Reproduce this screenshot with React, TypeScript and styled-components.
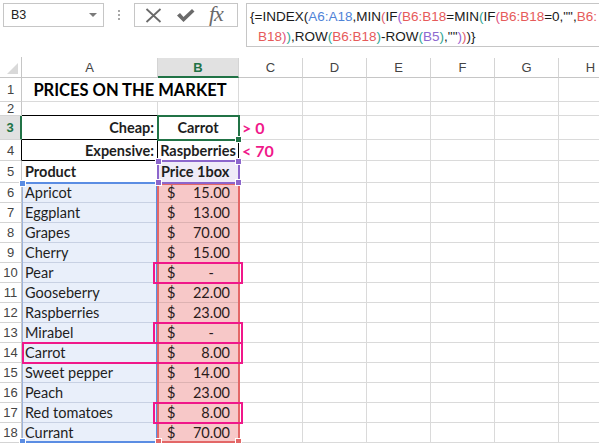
import styled, { createGlobalStyle } from 'styled-components'

const GlobalStyle = createGlobalStyle`
  html, body {
    margin: 0;
    padding: 0;
    background: #fff;
    overflow: hidden;
  }
`

const CELL_FONT = `Lato, "Liberation Sans", sans-serif`
const UI_FONT = `"Liberation Sans", Arial, sans-serif`
const GREEN = '#217346'
const MAGENTA = '#f0188a'

const COLS = [22, 136, 81, 64, 64, 64, 64, 64, 64]
const ROWS = [21, 24, 14, 24, 21, 22, ...Array(13).fill(20)]
const LETTERS = ['A', 'B', 'C', 'D', 'E', 'F', 'G', 'H']

type Fill = 'blue' | 'pink' | 'lilac'
const FILLS: Record<Fill, string> = { blue: '#e9effa', pink: '#f7c8c8', lilac: '#efebf8' }
const GRID_LINES: Record<Fill, string> = { blue: '#c8d1e3', pink: '#ddb2b2', lilac: '#d6d1e2' }

// ---------- formula bar ----------

const TopBar = styled.div`
  display: flex;
  align-items: flex-start;
  height: 57px;
  box-sizing: border-box;
  padding: 3px 0 0 3px;
`

const NameBox = styled.div`
  width: 101px;
  height: 24px;
  box-sizing: border-box;
  border: 1px solid #c6c6c6;
  display: flex;
  align-items: center;
  justify-content: space-between;
  padding: 0 6px 0 7px;
  font: 12.5px ${UI_FONT};
  color: #222;
`

const DropArrow = styled.span`
  width: 0;
  height: 0;
  border-left: 4px solid transparent;
  border-right: 4px solid transparent;
  border-top: 4px solid #7a7a7a;
`

const Grip = styled.div`
  width: 30px;
  height: 24px;
  display: flex;
  flex-direction: column;
  align-items: center;
  justify-content: center;
  gap: 2px;

  span {
    width: 2px;
    height: 2px;
    background: #a8a8a8;
  }
`

const FxButtons = styled.div`
  width: 104px;
  height: 24px;
  box-sizing: border-box;
  border: 1px solid #c6c6c6;
  display: flex;
  align-items: center;
  padding: 0 0 0 10px;
  gap: 14px;
  color: #6a6a6a;
`

const FxLabel = styled.span`
  font: italic 22px "Liberation Serif", "Times New Roman", serif;
  color: #6a6a6a;
  line-height: 1;
  margin-top: -2px;
  letter-spacing: -1px;
`

const FormulaBox = styled.div`
  flex: 1;
  margin-left: 8px;
  height: 44px;
  box-sizing: border-box;
  border: 1px solid #c6c6c6;
  border-right: none;
  padding: 3px 0 0 3px;
  font: 13.5px ${UI_FONT};
  color: #1a1a1a;
  line-height: 20px;
  white-space: pre;
  overflow: hidden;
`

const FormulaLine = styled.div<{ $indent?: number }>`
  padding-left: ${p => p.$indent ?? 0}px;
`

const Tok = styled.span<{ $c?: string }>`
  color: ${p => p.$c ?? '#1a1a1a'};
`

const REF_BLUE = '#4f84d8'
const REF_RED = '#e65a5a'
const REF_PURPLE = '#8d68cf'
const P2 = '#e05d6f'
const P3 = '#9b62d3'
const P4 = '#2ea594'
const P5 = '#e0507f'

const LINE1: [string, string?][] = [
  ['{=INDEX('], ['A6:A18', REF_BLUE], [',MIN'], ['(', P2], ['IF'], ['(', P3],
  ['B6:B18', REF_RED], ['=MIN'], ['(', P4], ['IF'], ['(', P5], ['B6:B18', REF_RED],
  ['=0,"",'], ['B6:', REF_RED],
]
const LINE2: [string, string?][] = [
  ['B18', REF_RED], [')', P5], [')', P4], [',ROW'], ['(', P4], ['B6:B18', REF_RED],
  [')', P4], ['-ROW'], ['(', P4], ['B5', REF_PURPLE], [')', P4], [',""'], [')', P3],
  [')', P2], [')'], ['}'],
]

// ---------- sheet ----------

const Sheet = styled.div`
  display: grid;
  grid-template-columns: ${COLS.map(c => `${c}px`).join(' ')};
  grid-template-rows: ${ROWS.map(r => `${r}px`).join(' ')};
`

const Corner = styled.div`
  grid-row: 1;
  grid-column: 1;
  position: relative;
  box-sizing: border-box;
  border-right: 1px solid #c6c6c6;
  border-bottom: 1px solid #c6c6c6;

  &::after {
    content: '';
    position: absolute;
    right: 3px;
    bottom: 3px;
    width: 0;
    height: 0;
    border-left: 11px solid transparent;
    border-bottom: 11px solid #d9d9d9;
  }
`

const ColHead = styled.div<{ $c: number; $active?: boolean }>`
  grid-row: 1;
  grid-column: ${p => p.$c};
  box-sizing: border-box;
  display: flex;
  align-items: center;
  justify-content: center;
  margin-top: 1px;
  border-right: 1px solid #d4d4d4;
  border-bottom: ${p => (p.$active ? `2px solid ${GREEN}` : '1px solid #c6c6c6')};
  background: ${p => (p.$active ? '#e1e1e1' : '#fff')};
  color: ${p => (p.$active ? GREEN : '#444')};
  font: ${p => (p.$active ? 700 : 400)} 13px ${UI_FONT};
`

const RowHead = styled.div<{ $r: number; $active?: boolean; $edge?: string }>`
  grid-row: ${p => p.$r};
  grid-column: 1;
  box-sizing: border-box;
  display: flex;
  align-items: center;
  justify-content: center;
  overflow: hidden;
  border-bottom: 1px solid #d4d4d4;
  border-right: ${p =>
    p.$active ? `2px solid ${GREEN}` : `1px solid ${p.$edge ?? '#c6c6c6'}`};
  background: ${p => (p.$active ? '#e1e1e1' : '#fff')};
  color: ${p => (p.$active ? GREEN : '#444')};
  font: ${p => (p.$active ? 700 : 400)} 13px ${UI_FONT};
`

type CellProps = {
  $r: number
  $c: number
  $span?: number
  $fill?: Fill
  $align?: 'flex-start' | 'center' | 'flex-end' | 'space-between'
  $bold?: boolean
  $size?: number
  $color?: string
  $br?: string
  $bb?: string
}

const Cell = styled.div<CellProps>`
  grid-row: ${p => p.$r};
  grid-column: ${p => p.$c} / span ${p => p.$span ?? 1};
  box-sizing: border-box;
  min-width: 0;
  display: flex;
  align-items: center;
  justify-content: ${p => p.$align ?? 'flex-start'};
  padding: 0 3px 0 3px;
  overflow: hidden;
  white-space: nowrap;
  border-right: 1px solid ${p => p.$br ?? (p.$fill ? GRID_LINES[p.$fill] : '#dadada')};
  border-bottom: 1px solid ${p => p.$bb ?? (p.$fill ? GRID_LINES[p.$fill] : '#dadada')};
  background: ${p => (p.$fill ? FILLS[p.$fill] : '#fff')};
  font-family: ${CELL_FONT};
  font-size: ${p => p.$size ?? 14.5}px;
  font-weight: ${p => (p.$bold ? 700 : 400)};
  color: ${p => p.$color ?? '#1e1e1e'};
`

const Money = styled(Cell)`
  padding: 0 8px 0 9px;
`

const Dash = styled.span`
  padding-right: 16px;
`

const Range = styled.div<{ $row: string; $col: string; $color: string; $m: string; $left?: string }>`
  grid-row: ${p => p.$row};
  grid-column: ${p => p.$col};
  position: relative;
  z-index: 2;
  pointer-events: none;
  margin: ${p => p.$m};
  border: 2px solid ${p => p.$color};
  ${p => (p.$left ? `border-left: 1px solid ${p.$left};` : '')}
`

const Mark = styled(Range)`
  z-index: 4;
`

const Handle = styled.span<{ $pos: 'tl' | 'tr' | 'bl' | 'br'; $color: string; $size?: number }>`
  position: absolute;
  width: ${p => p.$size ?? 5}px;
  height: ${p => p.$size ?? 5}px;
  background: ${p => p.$color};
  border: 1px solid #fff;
  ${p => (p.$pos[0] === 't' ? 'top: -4px;' : 'bottom: -4px;')}
  ${p => (p.$pos[1] === 'l' ? 'left: -4px;' : 'right: -4px;')}
`

type Item = { name: string; price: number }

const ITEMS: Item[] = [
  { name: 'Apricot', price: 15 },
  { name: 'Eggplant', price: 13 },
  { name: 'Grapes', price: 70 },
  { name: 'Cherry', price: 15 },
  { name: 'Pear', price: 0 },
  { name: 'Gooseberry', price: 22 },
  { name: 'Raspberries', price: 23 },
  { name: 'Mirabel', price: 0 },
  { name: 'Carrot', price: 8 },
  { name: 'Sweet pepper', price: 14 },
  { name: 'Peach', price: 23 },
  { name: 'Red tomatoes', price: 8 },
  { name: 'Currant', price: 70 },
]

const BLUE = '#5b8de3'
const RED = '#e36767'
const PURPLE = '#8c66cc'

// grid row of sheet row n is n + 1 (header takes the first row)
const gr = (n: number) => n + 1

const XIcon = () => (
  <svg width="17" height="15" viewBox="0 0 17 15">
    <path d="M1.5 1 L15.5 14 M15.5 1 L1.5 14" stroke="#6a6a6a" strokeWidth="1.8" fill="none" />
  </svg>
)

const CheckIcon = () => (
  <svg width="19" height="15" viewBox="0 0 19 15">
    <path d="M1 7.5 L4 5 L7.5 9 L16 1 L18.5 3.5 L7.5 14 Z" fill="#6a6a6a" />
  </svg>
)

const App = () => {
  const emptyCells = (row: number, from: number) =>
    LETTERS.slice(from).map((_, i) => <Cell key={`e${row}-${i}`} $r={gr(row)} $c={from + i + 2} />)

  return (
    <>
      <GlobalStyle />
      <TopBar>
        <NameBox>
          B3
          <DropArrow />
        </NameBox>
        <Grip>
          <span />
          <span />
          <span />
        </Grip>
        <FxButtons>
          <XIcon />
          <CheckIcon />
          <FxLabel>fx</FxLabel>
        </FxButtons>
        <FormulaBox>
          <FormulaLine>
            {LINE1.map(([t, c], i) => (
              <Tok key={i} $c={c}>{t}</Tok>
            ))}
          </FormulaLine>
          <FormulaLine $indent={8}>
            {LINE2.map(([t, c], i) => (
              <Tok key={i} $c={c}>{t}</Tok>
            ))}
          </FormulaLine>
        </FormulaBox>
      </TopBar>

      <Sheet>
        <Corner />
        {LETTERS.map((l, i) => (
          <ColHead key={l} $c={i + 2} $active={l === 'B'}>{l}</ColHead>
        ))}

        {Array.from({ length: 18 }, (_, i) => i + 1).map(n => (
          <RowHead key={n} $r={gr(n)} $active={n === 3} $edge={n === 4 ? '#000' : undefined}>
            {n}
          </RowHead>
        ))}

        {/* row 1 */}
        <Cell $r={gr(1)} $c={2} $span={2} $align="center" $bold $size={16.5} $color="#000">
          PRICES ON THE MARKET
        </Cell>
        {emptyCells(1, 2)}

        {/* row 2 */}
        <Cell $r={gr(2)} $c={2} $bb="#000" />
        <Cell $r={gr(2)} $c={3} $bb="#000" />
        {emptyCells(2, 2)}

        {/* rows 3-4 */}
        <Cell $r={gr(3)} $c={2} $align="flex-end" $bold $br="#000" $bb="#000">Cheap:</Cell>
        <Cell $r={gr(3)} $c={3} $align="center" $bold $br="#000" $bb="#000">Carrot</Cell>
        <Cell $r={gr(3)} $c={4} $bold $size={16} $color={MAGENTA}>&gt; 0</Cell>
        {emptyCells(3, 3)}
        <Cell $r={gr(4)} $c={2} $align="flex-end" $bold $br="#000" $bb="#000">Expensive:</Cell>
        <Cell $r={gr(4)} $c={3} $align="center" $bold $br="#000" $bb="#000">Raspberries</Cell>
        <Cell $r={gr(4)} $c={4} $bold $size={16} $color={MAGENTA}>&lt; 70</Cell>
        {emptyCells(4, 3)}

        {/* row 5 */}
        <Cell $r={gr(5)} $c={2} $bold>Product</Cell>
        <Cell $r={gr(5)} $c={3} $bold $fill="lilac">Price 1box</Cell>
        {emptyCells(5, 2)}

        {/* data */}
        {ITEMS.map((it, i) => {
          const n = i + 6
          return [
            <Cell key={`a${n}`} $r={gr(n)} $c={2} $fill="blue">{it.name}</Cell>,
            <Money key={`b${n}`} $r={gr(n)} $c={3} $fill="pink" $align="space-between" $color="#2a1a1a">
              <span>$</span>
              {it.price ? <span>{it.price.toFixed(2)}</span> : <Dash>-</Dash>}
            </Money>,
            ...emptyCells(n, 2),
          ]
        })}

        {/* formula reference ranges */}
        <Range $row={`${gr(6)} / ${gr(19)}`} $col="2" $color={BLUE} $left="#9fb5dd" $m="-1px 0 0 0">
          <Handle $pos="tl" $color={BLUE} />
          <Handle $pos="bl" $color={BLUE} />
        </Range>
        <Range $row={`${gr(6)} / ${gr(19)}`} $col="3" $color={RED} $m="0 -1px 0 -1px">
          <Handle $pos="bl" $color={RED} />
          <Handle $pos="br" $color={RED} />
        </Range>
        <Range $row={`${gr(5)}`} $col="3" $color={PURPLE} $m="-1px">
          <Handle $pos="tl" $color={PURPLE} />
          <Handle $pos="tr" $color={PURPLE} />
          <Handle $pos="bl" $color={PURPLE} />
          <Handle $pos="br" $color={PURPLE} />
        </Range>

        {/* active cell */}
        <Range $row={`${gr(3)}`} $col="3" $color={GREEN} $m="-1px">
          <Handle $pos="br" $color={GREEN} $size={5} />
        </Range>

        {/* highlighted results */}
        <Mark $row={`${gr(10)}`} $col="3" $color={MAGENTA} $m="-1px -4px -1px -5px" />
        <Mark $row={`${gr(13)}`} $col="3" $color={MAGENTA} $m="-1px -4px -1px -5px" />
        <Mark $row={`${gr(14)}`} $col="2 / 4" $color={MAGENTA} $m="-1px -4px -1px 0" />
        <Mark $row={`${gr(17)}`} $col="3" $color={MAGENTA} $m="-1px -4px -1px -5px" />
      </Sheet>
    </>
  )
}

export default App
